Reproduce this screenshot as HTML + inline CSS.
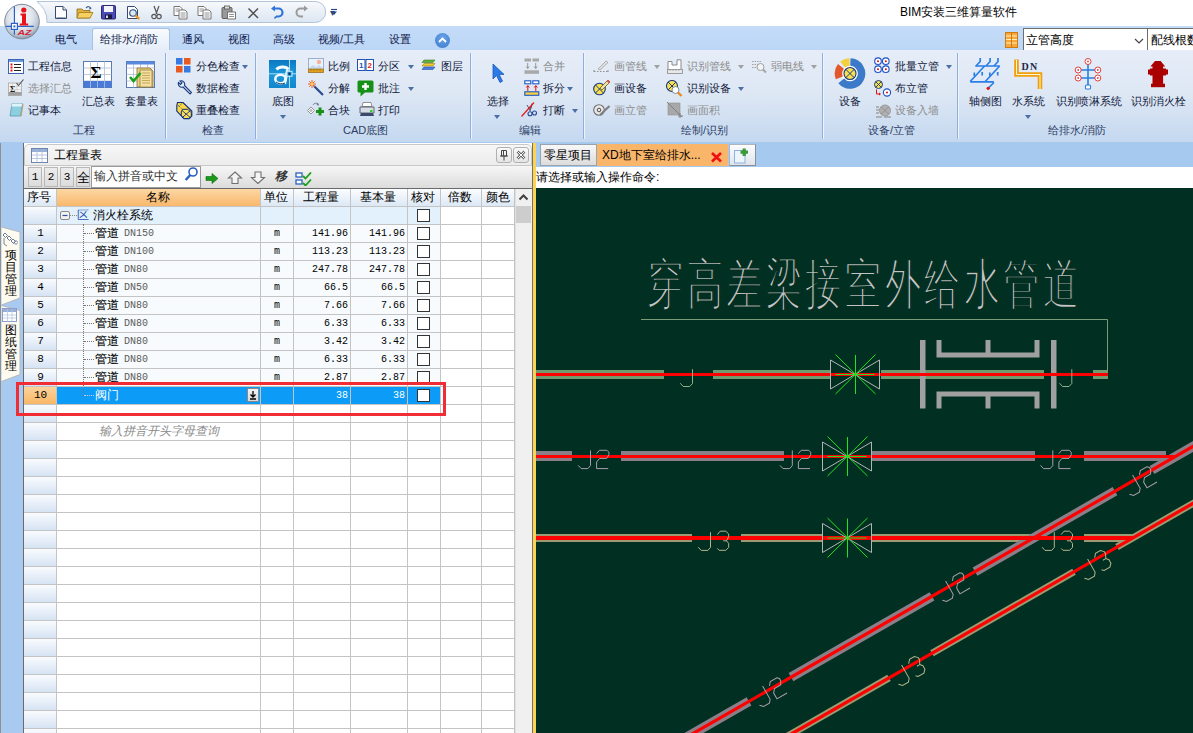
<!DOCTYPE html><html><head><meta charset="utf-8"><style>
*{margin:0;padding:0;box-sizing:border-box}
html,body{width:1193px;height:733px;overflow:hidden;background:#fff;font-family:"Liberation Sans",sans-serif;font-size:12px;color:#000}
.ab{position:absolute}
.t{position:absolute;white-space:nowrap;line-height:14px;font-size:11px}
.tt{position:absolute;white-space:nowrap;line-height:14px;font-size:12px}
.rb{color:#10183a;font-weight:500}
.dis{color:#8c8c8c}
.arr{position:absolute;width:0;height:0;border-left:3.5px solid transparent;border-right:3.5px solid transparent;border-top:4px solid #4a6fa5}
.arrg{border-top-color:#a0a0a0}
.sep{position:absolute;top:53px;width:1px;height:86px;background:#8eb0dc;box-shadow:1px 0 0 #eef4fb}
.glab{position:absolute;top:123px;line-height:14px;color:#2c3c64;white-space:nowrap;font-size:11px}
.mono{font-family:"Liberation Mono",monospace}
</style></head><body>
<div class="ab" style="left:0;top:0;width:1193px;height:26px;background:#fff"></div>
<svg class="ab" style="left:0;top:0" width="340" height="26"><defs><linearGradient id="qg" x1="0" y1="0" x2="0" y2="1"><stop offset="0" stop-color="#f7f9fc"/><stop offset="1" stop-color="#dce6f2"/></linearGradient></defs><path d="M36.9 1.5H315.2A10.5 10.5 0 0 1 315.2 22.5H47A25 25 0 0 0 36.9 1.5Z" fill="url(#qg)" stroke="#b4c4d8" stroke-width="1"/></svg>
<div class="t" style="left:330px;top:6px;font-size:10px;color:#2b4a7a">&#9662;</div>
<div class="tt" style="left:900px;top:5px;color:#000">BIM安装三维算量软件</div>
<div class="ab" style="left:0;top:26px;width:1193px;height:24px;background:linear-gradient(#c4dcf8,#bcd6f6)"></div>
<div class="ab" style="left:92px;top:28px;width:78px;height:23px;border:1px solid #a9c2e2;border-bottom:none;border-radius:3px 3px 0 0;background:linear-gradient(#f8fbfe,#e4edf8)"></div>
<div class="t" style="left:55px;top:32px;color:#0e1648;font-weight:500">电气</div>
<div class="t" style="left:100px;top:32px;color:#0e1648;font-weight:500">给排水/消防</div>
<div class="t" style="left:182px;top:32px;color:#0e1648;font-weight:500">通风</div>
<div class="t" style="left:228px;top:32px;color:#0e1648;font-weight:500">视图</div>
<div class="t" style="left:273px;top:32px;color:#0e1648;font-weight:500">高级</div>
<div class="t" style="left:318px;top:32px;color:#0e1648;font-weight:500">视频/工具</div>
<div class="t" style="left:389px;top:32px;color:#0e1648;font-weight:500">设置</div>
<div class="ab" style="left:435px;top:33px;width:15px;height:15px;border-radius:50%;background:radial-gradient(circle at 50% 35%,#6aa6ea,#3b78c8)"></div>
<svg class="ab" style="left:435px;top:33px" width="15" height="15"><path d="M4 9 L7.5 5.5 L11 9" stroke="#fff" stroke-width="1.8" fill="none"/></svg>
<svg class="ab" style="left:1005px;top:32px" width="13" height="16"><rect x=".5" y=".5" width="12" height="15" fill="#f6a93a" stroke="#d07a10"/><path d="M1 4h11M1 7.5h11M1 11h11" stroke="#fff2c8" stroke-width="1.2"/><path d="M6.5 1v14" stroke="#d07a10" stroke-width="1"/></svg>
<div class="ab" style="left:1023px;top:28px;width:125px;height:22px;border:1px solid #6e6e6e;border-bottom:none;border-right:none;background:#fff"></div>
<div class="tt" style="left:1026px;top:33px;color:#000">立管高度</div>
<svg class="ab" style="left:1134px;top:38px" width="10" height="7"><path d="M1 1 L5 5 L9 1" stroke="#444" stroke-width="1.2" fill="none"/></svg>
<div class="ab" style="left:1147px;top:28px;width:46px;height:22px;border-left:1.5px solid #6e6e6e;border-top:1px solid #6e6e6e;background:#fff"></div>
<div class="tt" style="left:1151px;top:33px;color:#000">配线根数</div>
<div class="ab" style="left:0;top:50px;width:1193px;height:92px;background:linear-gradient(#e6edf8 0%,#dde7f4 50%,#c4d8f0 100%)"></div>
<div class="sep" style="left:165px"></div>
<div class="sep" style="left:255px"></div>
<div class="sep" style="left:470px"></div>
<div class="sep" style="left:583px"></div>
<div class="sep" style="left:822px"></div>
<div class="sep" style="left:957px"></div>
<div class="t rb" style="left:28px;top:59px">工程信息</div>
<div class="t dis" style="left:28px;top:81px">选择汇总</div>
<div class="t rb" style="left:28px;top:103px">记事本</div>
<div class="t rb" style="left:82px;top:94px">汇总表</div>
<div class="t rb" style="left:125px;top:94px">套量表</div>
<div class="glab" style="left:73px">工程</div>
<div class="t rb" style="left:196px;top:59px">分色检查</div>
<div class="arr" style="left:242px;top:65px"></div>
<div class="t rb" style="left:196px;top:81px">数据检查</div>
<div class="t rb" style="left:196px;top:103px">重叠检查</div>
<div class="glab" style="left:202px">检查</div>
<div class="t rb" style="left:272px;top:94px">底图</div>
<div class="arr" style="left:280px;top:115px"></div>
<div class="t rb" style="left:328px;top:59px">比例</div>
<div class="t rb" style="left:378px;top:59px">分区</div>
<div class="arr" style="left:408px;top:65px"></div>
<div class="t rb" style="left:441px;top:59px">图层</div>
<div class="t rb" style="left:328px;top:81px">分解</div>
<div class="t rb" style="left:378px;top:81px">批注</div>
<div class="arr" style="left:408px;top:87px"></div>
<div class="t rb" style="left:328px;top:103px">合块</div>
<div class="t rb" style="left:378px;top:103px">打印</div>
<div class="glab" style="left:343px">CAD底图</div>
<div class="t rb" style="left:487px;top:94px">选择</div>
<div class="arr" style="left:494px;top:115px"></div>
<div class="t dis" style="left:543px;top:59px">合并</div>
<div class="t rb" style="left:543px;top:81px">拆分</div>
<div class="arr" style="left:567px;top:87px"></div>
<div class="t rb" style="left:543px;top:103px">打断</div>
<div class="arr" style="left:572px;top:109px"></div>
<div class="glab" style="left:519px">编辑</div>
<div class="t dis" style="left:614px;top:59px">画管线</div>
<div class="arr arrg" style="left:654px;top:65px"></div>
<div class="t dis" style="left:687px;top:59px">识别管线</div>
<div class="arr arrg" style="left:738px;top:65px"></div>
<div class="t dis" style="left:771px;top:59px">弱电线</div>
<div class="arr arrg" style="left:811px;top:65px"></div>
<div class="t rb" style="left:614px;top:81px">画设备</div>
<div class="t rb" style="left:687px;top:81px">识别设备</div>
<div class="arr" style="left:738px;top:87px"></div>
<div class="t dis" style="left:614px;top:103px">画立管</div>
<div class="t dis" style="left:687px;top:103px">画面积</div>
<div class="glab" style="left:681px">绘制/识别</div>
<div class="t rb" style="left:839px;top:94px">设备</div>
<div class="t rb" style="left:895px;top:59px">批量立管</div>
<div class="arr" style="left:946px;top:65px"></div>
<div class="t rb" style="left:895px;top:81px">布立管</div>
<div class="t dis" style="left:895px;top:103px">设备入墙</div>
<div class="glab" style="left:868px">设备/立管</div>
<div class="t rb" style="left:969px;top:94px">轴侧图</div>
<div class="t rb" style="left:1012px;top:94px">水系统</div>
<div class="arr" style="left:1025px;top:115px"></div>
<div class="t rb" style="left:1056px;top:94px">识别喷淋系统</div>
<div class="t rb" style="left:1131px;top:94px">识别消火栓</div>
<div class="glab" style="left:1048px">给排水/消防</div>
<div class="ab" style="left:0;top:142px;width:1193px;height:591px;background:#a9caf0"></div>
<div class="ab" style="left:23px;top:143px;width:510px;height:590px;background:#fff;border-left:1px solid #6a6a6a"></div>
<div class="ab" style="left:24px;top:144px;width:508px;height:22px;border:1px solid #c8c8c8;border-radius:5px 5px 0 0;background:linear-gradient(#f7f7f7,#ececec)"></div>
<div class="tt" style="left:54px;top:148px;font-size:12px">工程量表</div>
<div class="ab" style="left:24px;top:166px;width:509px;height:23px;background:linear-gradient(#f6f6f6,#dcdcdc);border-bottom:1px solid #6a6a6a"></div>
<div class="ab" style="left:28px;top:167px;width:14px;height:20px;border:1px solid #b8b8b8;background:linear-gradient(#ececec,#dcdcdc);text-align:center;line-height:19px;font-size:11px;font-family:'Liberation Mono'">1</div>
<div class="ab" style="left:44px;top:167px;width:14px;height:20px;border:1px solid #b8b8b8;background:linear-gradient(#ececec,#dcdcdc);text-align:center;line-height:19px;font-size:11px;font-family:'Liberation Mono'">2</div>
<div class="ab" style="left:60px;top:167px;width:14px;height:20px;border:1px solid #b8b8b8;background:linear-gradient(#ececec,#dcdcdc);text-align:center;line-height:19px;font-size:11px;font-family:'Liberation Mono'">3</div>
<div class="ab" style="left:76px;top:167px;width:14px;height:20px;border:1px solid #b8b8b8;background:linear-gradient(#ececec,#dcdcdc);text-align:center;line-height:19px;font-size:13px;font-family:'Liberation Sans'">全</div>
<div class="ab" style="left:91px;top:166px;width:110px;height:22px;border:1px solid #9a9a9a;background:#fff"></div>
<div class="tt" style="left:94px;top:169px;color:#333">输入拼音或中文</div>
<div class="ab" style="left:24px;top:189px;width:491px;height:17px;background:linear-gradient(#fbfdff,#dce8f5)"></div>
<div class="ab" style="left:57px;top:189px;width:203px;height:17px;background:linear-gradient(#fdd7a4,#f9b86c)"></div>
<div class="tt" style="left:27px;top:190px">序号</div>
<div class="tt" style="left:146px;top:190px">名称</div>
<div class="tt" style="left:264px;top:190px">单位</div>
<div class="tt" style="left:303px;top:190px">工程量</div>
<div class="tt" style="left:360px;top:190px">基本量</div>
<div class="tt" style="left:411px;top:190px">核对</div>
<div class="tt" style="left:448px;top:190px">倍数</div>
<div class="tt" style="left:486px;top:190px">颜色</div>
<svg class="ab" style="left:3px;top:3px" width="38" height="38" viewBox="0 0 38 38"><defs><radialGradient id="lg" cx="45%" cy="35%" r="65%"><stop offset="0" stop-color="#ffffff"/><stop offset="0.55" stop-color="#dfe5ec"/><stop offset="0.85" stop-color="#b8c3d0"/><stop offset="1" stop-color="#8a96a6"/></radialGradient></defs><circle cx="19" cy="18.6" r="17.3" fill="url(#lg)" stroke="#7f8a98" stroke-width="1"/><path d="M11.4 3.5V31.7M3 23.4H30.7" stroke="#2d63c8" stroke-width="1.2"/><rect x="8.4" y="20.4" width="6" height="6" fill="#fff" stroke="#2d63c8" stroke-width="1.2"/><rect x="10.4" y="22.4" width="2" height="2" fill="#2d63c8"/><circle cx="20.8" cy="7" r="2.6" fill="#e8141c"/><path d="M17.5 10.6h5.5v10h2.2v2h-8.4v-2h2.2v-8h-1.5z" fill="#e8141c"/><text transform="translate(14.6,31.6) scale(1.38,1)" font-family="Liberation Sans" font-weight="bold" font-style="italic" font-size="7.6" fill="#d42030" letter-spacing="-0.2">AZ</text></svg>
<svg class="ab" style="left:54px;top:5px" width="14" height="15" viewBox="0 0 14 15"><path d="M1.5 1.5h7.5l3.5 3.5v8.5h-11z" fill="#fff" stroke="#394a6a"/><path d="M9 1.5v3.5h3.5" fill="#dfe6ef" stroke="#394a6a"/><path d="M2.5 12.5h9" stroke="#9aa6b8"/></svg>
<svg class="ab" style="left:76px;top:5px" width="18" height="15" viewBox="0 0 18 15"><path d="M1 4h5l1.5 1.5H14V13H1z" fill="#e2b23a" stroke="#8a6a20" stroke-width=".8"/><path d="M3 7.5h14l-3 5.5H1z" fill="#f8d060" stroke="#9a7a20" stroke-width=".8"/><path d="M10 3c2-2 4-1.5 5 .5" stroke="#4a6890" fill="none" stroke-width="1.2"/><path d="M14 1.5l1.5 2.5-2.5.5" fill="#4a6890"/></svg>
<svg class="ab" style="left:101px;top:5px" width="15" height="15" viewBox="0 0 15 15"><rect x="0.5" y="0.5" width="14" height="13.5" rx="1" fill="#4a4ab8" stroke="#2a2a70"/><rect x="3" y="1" width="9" height="6" fill="#f4f4f8"/><rect x="4" y="9.5" width="7" height="4.5" fill="#1a1a40"/><rect x="5" y="10.5" width="2" height="2.5" fill="#d8d8e8"/></svg>
<svg class="ab" style="left:126px;top:5px" width="15" height="15" viewBox="0 0 15 15"><path d="M1.5 1.5h7l3 3v9h-10z" fill="#fff" stroke="#394a6a"/><circle cx="7" cy="8" r="3.3" fill="#dbeaf6" stroke="#2a4a7a" stroke-width="1.1"/><path d="M9.3 10.3l4 3.5" stroke="#e8962a" stroke-width="2.2"/></svg>
<svg class="ab" style="left:150px;top:5px" width="13" height="15" viewBox="0 0 13 15"><path d="M4 1l3 8M9 1l-3 8" stroke="#555" stroke-width="1.2"/><circle cx="4" cy="11.5" r="2.2" fill="none" stroke="#555" stroke-width="1.2"/><circle cx="9" cy="11.5" r="2.2" fill="none" stroke="#555" stroke-width="1.2"/></svg>
<svg class="ab" style="left:173px;top:5px" width="16" height="15" viewBox="0 0 16 15"><path d="M1 1.5h6l2 2v7H1z" fill="#fff" stroke="#666" stroke-width=".9"/><path d="M6 5h6l2 2v7H6z" fill="#fff" stroke="#666" stroke-width=".9"/><path d="M7.5 8h5M7.5 10h5M7.5 12h5M2.5 4h4M2.5 6h3" stroke="#777" stroke-width=".8"/></svg>
<svg class="ab" style="left:197px;top:5px" width="16" height="15" viewBox="0 0 16 15"><path d="M1 1.5h6l2 2v7H1z" fill="#fff" stroke="#666" stroke-width=".9"/><path d="M6 5h6l2 2v7H6z" fill="#fff" stroke="#666" stroke-width=".9"/><path d="M7.5 8h5M7.5 10h5M7.5 12h5M2.5 4h4M2.5 6h3" stroke="#777" stroke-width=".8"/></svg>
<svg class="ab" style="left:221px;top:5px" width="16" height="15" viewBox="0 0 16 15"><rect x="1" y="2.5" width="10" height="11" rx="1" fill="#9a9a9a" stroke="#555" stroke-width=".9"/><rect x="3.5" y="1" width="5" height="3" fill="#ddd" stroke="#555" stroke-width=".8"/><path d="M6.5 7h8v7h-8z" fill="#fff" stroke="#666" stroke-width=".9"/><path d="M8 9.5h5M8 11.5h5" stroke="#777" stroke-width=".8"/></svg>
<svg class="ab" style="left:247px;top:7px" width="13" height="12" viewBox="0 0 13 12"><path d="M1.5 1.5l9.5 9.5M11 1.5l-9.5 9.5" stroke="#505050" stroke-width="1.5"/></svg>
<svg class="ab" style="left:270px;top:5px" width="15" height="15" viewBox="0 0 15 15"><path d="M4 3.5h4.5a4 4 0 0 1 0 8H6" stroke="#2e74d8" stroke-width="2.2" fill="none"/><path d="M1 3.5l4-3v6z" fill="#2e74d8"/><path d="M6 11.5l-1.5 2" stroke="#2e74d8" stroke-width="1.5"/></svg>
<svg class="ab" style="left:294px;top:5px" width="15" height="15" viewBox="0 0 15 15"><path d="M11 3.5H6.5a4 4 0 0 0 0 8H9" stroke="#9a9a9a" stroke-width="2" fill="none"/><path d="M14 3.5l-4-3v6z" fill="#9a9a9a"/></svg>
<svg class="ab" style="left:330px;top:8px" width="8" height="8" viewBox="0 0 8 8"><path d="M1 1.5h6" stroke="#2a4a8a" stroke-width="1.2"/><path d="M1 3.5h6l-3 3.5z" fill="#2a4a8a"/></svg>
<svg class="ab" style="left:8px;top:59px" width="16" height="15" viewBox="0 0 16 15"><rect x=".5" y=".5" width="15" height="14" fill="#fff" stroke="#3a64b0"/><rect x="1" y="1" width="14" height="2" fill="#6a9ae0"/><rect x="2.5" y="4.5" width="2" height="2" fill="#e01010"/><rect x="2.5" y="7.5" width="2" height="2" fill="#e01010"/><rect x="2.5" y="10.5" width="2" height="2" fill="#e01010"/><path d="M6 5.5h7M6 8.5h7M6 11.5h7" stroke="#222" stroke-width="1"/></svg>
<svg class="ab" style="left:8px;top:79px" width="16" height="17" viewBox="0 0 16 17"><rect x=".5" y="4" width="13" height="12.5" fill="#f2f2f2" stroke="#a8a8a8" stroke-width=".8"/><path d="M.5 7.5h13M.5 10.5h13M4.5 4v12.5M9 4v12.5" stroke="#c8c8c8" stroke-width=".6"/><rect x=".5" y="13" width="13" height="3.5" fill="#a0a0a0"/><text x="2" y="12.5" font-family="Liberation Serif" font-weight="bold" font-size="8" fill="#202020">Σ</text><path d="M8.5 4l2 2.5 5-6" stroke="#505050" stroke-width="1.1" fill="none"/></svg>
<svg class="ab" style="left:9px;top:102px" width="15" height="15" viewBox="0 0 15 15"><path d="M3 1.5h10.5l-2 12.5H1z" fill="#8cd0e0" stroke="#5a9ab0" stroke-width=".8"/><path d="M3 1.5h10.5l-1 3H2.5z" fill="#dff4fa"/><path d="M11.5 14l2-12.5 1 1-2 12z" fill="#b8a070"/></svg>
<svg class="ab" style="left:83px;top:61px" width="29" height="27" viewBox="0 0 29 27"><rect x=".5" y=".5" width="28" height="26" fill="#fff" stroke="#5878b0"/><path d="M7.5 .5V26.5" stroke="#b0bcd0" stroke-width=".8"/><path d="M14.5 .5V26.5" stroke="#b0bcd0" stroke-width=".8"/><path d="M21.5 .5V26.5" stroke="#b0bcd0" stroke-width=".8"/><path d="M.5 7.0H28.5" stroke="#b0bcd0" stroke-width=".8"/><path d="M.5 13.5H28.5" stroke="#b0bcd0" stroke-width=".8"/><path d="M.5 20.0H28.5" stroke="#b0bcd0" stroke-width=".8"/><rect x=".5" y="20" width="28" height="6.5" fill="#4a7ad8"/><path d="M7.5 20v6.5M14.5 20v6.5M21.5 20v6.5" stroke="#a8c4f0" stroke-width=".8"/><text x="7.5" y="17" font-family="Liberation Serif" font-weight="bold" font-size="17" fill="#000">Σ</text></svg>
<svg class="ab" style="left:126px;top:61px" width="29" height="27" viewBox="0 0 29 27"><rect x=".5" y=".5" width="28" height="26" fill="#fff" stroke="#5878b0"/><path d="M7.5 .5V26.5" stroke="#b0bcd0" stroke-width=".8"/><path d="M14.5 .5V26.5" stroke="#b0bcd0" stroke-width=".8"/><path d="M21.5 .5V26.5" stroke="#b0bcd0" stroke-width=".8"/><path d="M.5 7.0H28.5" stroke="#b0bcd0" stroke-width=".8"/><path d="M.5 13.5H28.5" stroke="#b0bcd0" stroke-width=".8"/><path d="M.5 20.0H28.5" stroke="#b0bcd0" stroke-width=".8"/><rect x=".5" y=".5" width="28" height="3" fill="#5a8ae0"/><path d="M11 7h13l3 3v16H11z" fill="#e8d080" stroke="#8a7030" stroke-width=".8"/><path d="M14 9h12v17H14z" fill="#f4e0a0" stroke="#9a8040" stroke-width=".8"/><path d="M16 12h8M16 14.5h8M16 17h8M16 19.5h8M16 22h8" stroke="#b09040" stroke-width=".7"/><path d="M4 16l3.5 4 7-8" stroke="#1aa01a" stroke-width="2.6" fill="none"/></svg>
<svg class="ab" style="left:176px;top:58px" width="15" height="15" viewBox="0 0 15 15"><rect x="0" y="0" width="6.5" height="6.5" fill="#3a7ae0"/><rect x="8" y="0" width="6.5" height="6.5" fill="#e85a20"/><rect x="0" y="8" width="6.5" height="6.5" fill="#e85a20"/><rect x="8" y="8" width="6.5" height="6.5" fill="#3a7ae0"/></svg>
<svg class="ab" style="left:176px;top:80px" width="16" height="16" viewBox="0 0 16 16"><path d="M2.5 2.5a3.5 3.5 0 0 0 4.5 4.5l7 7 1.5-1.5-7-7a3.5 3.5 0 0 0-4.5-4.5l2 2-1.5 1.5z" fill="#e8eef8" stroke="#1a3a80" stroke-width="1.1"/></svg>
<svg class="ab" style="left:176px;top:101px" width="17" height="19" viewBox="0 0 17 19"><path d="M1.5 1.5H7L15.8 10V15L13 17.8H8L.8 10V4.5z" fill="#f8d848" stroke="#102a70" stroke-width="1.1"/><path d="M6.5 8.3H11.8L15.3 11.8V15.3L12.8 17.5H8.2L5.3 14.8V10.8z" fill="#fbe060" stroke="#102a70" stroke-width="1"/><path d="M6 9.5L14.5 16.8M14.5 9.5L6 16.8" stroke="#102a70" stroke-width=".9"/><path d="M2 4l4.5 4.5M6.5 1.8L2.5 6" stroke="#102a70" stroke-width=".8" stroke-dasharray="1 1"/></svg>
<svg class="ab" style="left:269px;top:60px" width="27" height="28" viewBox="0 0 27 28"><defs><linearGradient id="dg" x1="0" y1="0" x2="0" y2="1"><stop offset="0" stop-color="#0b78c0"/><stop offset=".5" stop-color="#1c98dc"/><stop offset="1" stop-color="#1286cc"/></linearGradient></defs><rect x="0" y="0" width="27" height="28" fill="url(#dg)"/><path d="M20.5 0V28M0 13.8H27" stroke="#a8dcf6" stroke-width="1"/><path d="M7.5 9.5C10 6.5 17 6 19.5 9.5" stroke="#f4fbff" stroke-width="3" fill="none"/><path d="M18.5 10L15.5 24" stroke="#e0f4ff" stroke-width="3"/><ellipse cx="11.5" cy="19" rx="5.2" ry="4.3" fill="none" stroke="#f0faff" stroke-width="2.6"/><path d="M7 22c2 2 6 2.5 9 1" stroke="#204060" stroke-width="1" fill="none"/><rect x="18" y="11.3" width="5" height="5" fill="#1a8ed2" stroke="#c8ecfc" stroke-width="1"/><rect x="19.6" y="12.8" width="1.8" height="2" fill="#102030"/></svg>
<svg class="ab" style="left:308px;top:58px" width="16" height="15" viewBox="0 0 16 15"><rect x=".5" y=".5" width="15" height="14" fill="#e8f2fc" stroke="#8aa0c0" stroke-width=".8"/><circle cx="11" cy="4" r="2.2" fill="#f8b0a0"/><path d="M1 10l4-3 3 2 3-2 4 3v1H1z" fill="#c8d8ec"/><rect x=".5" y="11" width="15" height="3.5" fill="#e0a020" stroke="#9a6a10" stroke-width=".6"/><path d="M3 11v1.5M6 11v1.5M9 11v1.5M12 11v1.5" stroke="#6a4a10" stroke-width=".6"/></svg>
<svg class="ab" style="left:357px;top:59px" width="17" height="12" viewBox="0 0 17 12"><rect x=".5" y=".5" width="7.5" height="11" fill="#fff" stroke="#2050b0"/><rect x="9" y=".5" width="7.5" height="11" fill="#fff" stroke="#2050b0"/><text x="2" y="9" font-family="Liberation Sans" font-weight="bold" font-size="8" fill="#2050b0">1</text><text x="10.6" y="9" font-family="Liberation Sans" font-weight="bold" font-size="8" fill="#e02020">2</text></svg>
<svg class="ab" style="left:421px;top:59px" width="15" height="12" viewBox="0 0 15 12"><path d="M3 1h11l-2 2.5H1z" fill="#60b040" stroke="#3a8020" stroke-width=".6"/><path d="M3 4.5h11l-2 2.5H1z" fill="#f0c830" stroke="#a08010" stroke-width=".6"/><path d="M3 8h11l-2 2.5H1z" fill="#4a80e0" stroke="#2a50a0" stroke-width=".6"/></svg>
<svg class="ab" style="left:308px;top:80px" width="16" height="16" viewBox="0 0 16 16"><path d="M6 6l9 9" stroke="#2a4a90" stroke-width="2.2"/><path d="M4 0v8M0 4h8M1.2 1.2l5.6 5.6M6.8 1.2L1.2 6.8" stroke="#f06020" stroke-width="1"/><circle cx="4" cy="4" r="1.3" fill="#ffd040"/></svg>
<svg class="ab" style="left:357px;top:80px" width="17" height="17" viewBox="0 0 17 17"><path d="M2 .5h13a1.5 1.5 0 0 1 1.5 1.5v9a1.5 1.5 0 0 1-1.5 1.5H8l-4.5 4v-4H2A1.5 1.5 0 0 1 .5 11V2A1.5 1.5 0 0 1 2 .5z" fill="#189018"/><path d="M8.5 3v7M5 6.5h7" stroke="#fff" stroke-width="2.4"/></svg>
<svg class="ab" style="left:307px;top:102px" width="17" height="14" viewBox="0 0 17 14"><path d="M4 5l3.5 3.5L4 12 .5 8.5z" fill="#fff" stroke="#888" stroke-width=".9"/><path d="M4 6.5l2 2-2 2-2-2z" fill="#bbb"/><path d="M11.5 5.5h3v2.5h2.5v3h-2.5v2.5h-3v-2.5H9v-3h2.5z" fill="#189018"/><path d="M6 3c1-2 4-2.5 5.5-.5" stroke="#6a7a90" fill="none" stroke-width="1"/><path d="M11 .5l1 3-2.5-.5z" fill="#6a7a90"/></svg>
<svg class="ab" style="left:359px;top:102px" width="16" height="15" viewBox="0 0 16 15"><path d="M4 .5h8l1 4H3z" fill="#fff" stroke="#777" stroke-width=".8"/><path d="M1 5h14v6H1z" fill="#d8dce4" stroke="#505868" stroke-width=".9"/><path d="M2 11h12l1 3H1z" fill="#3a4a6a"/><rect x="11" y="8" width="2.5" height="2" fill="#30d030"/></svg>
<svg class="ab" style="left:492px;top:63px" width="13" height="21" viewBox="0 0 13 21"><path d="M1 1v15l3.5-3.5 3.5 7 2.5-1.3-3.3-6.8H12z" fill="#2a7ae8" stroke="#1a58b8" stroke-width=".8"/></svg>
<svg class="ab" style="left:524px;top:58px" width="16" height="16" viewBox="0 0 16 16"><rect x=".5" y=".5" width="6.5" height="3" fill="#a8a8a8"/><rect x="8.5" y=".5" width="6.5" height="3" fill="#a8a8a8"/><path d="M3.7 5v5M11.7 5v5" stroke="#808080" stroke-width=".8"/><path d="M2.2 8.5l1.5 2 1.5-2M10.2 8.5l1.5 2 1.5-2" stroke="#808080" fill="none" stroke-width=".8"/><rect x=".5" y="12.3" width="14.5" height="3.5" fill="#a8a8a8"/></svg>
<svg class="ab" style="left:524px;top:80px" width="16" height="16" viewBox="0 0 16 16"><rect x=".8" y=".8" width="6" height="3" fill="#fff" stroke="#1a58c8" stroke-width="1.1"/><rect x="8.8" y=".8" width="6" height="3" fill="#fff" stroke="#1a58c8" stroke-width="1.1"/><path d="M3.8 6v5M11.8 6v5" stroke="#e01010" stroke-width="1"/><path d="M2.3 7.5l1.5-2 1.5 2M10.3 7.5l1.5-2 1.5 2" stroke="#e01010" fill="none" stroke-width="1"/><rect x=".8" y="11.8" width="14" height="3.5" fill="#f8d040" stroke="#1a58c8" stroke-width="1.1"/></svg>
<svg class="ab" style="left:521px;top:102px" width="17" height="15" viewBox="0 0 17 15"><path d="M11 1.5c-.5 4-1 5.5-2.5 7M6 3l3.5 6" stroke="#4a5a7a" stroke-width="1"/><circle cx="9" cy="11.8" r="2" fill="none" stroke="#2a4a9a" stroke-width="1.1"/><circle cx="13.5" cy="11" r="2" fill="none" stroke="#2a4a9a" stroke-width="1.1"/><path d="M.5 14.5L13 .5" stroke="#e81818" stroke-width="1.2"/></svg>
<svg class="ab" style="left:593px;top:59px" width="16" height="13" viewBox="0 0 16 13"><path d="M1 12.5h14" stroke="#909090" stroke-width="1" stroke-dasharray="1.5 1.5"/><path d="M1 11v3M15 11v3" stroke="#909090"/><path d="M5 10l8-8 2 1.5-8 7.5z" fill="#e0e0e0" stroke="#a0a0a0" stroke-width=".8"/></svg>
<svg class="ab" style="left:593px;top:79px" width="18" height="17" viewBox="0 0 18 17"><circle cx="6.5" cy="10" r="5.8" fill="#f8e050" stroke="#1a3a80" stroke-width="1.1"/><path d="M2.5 6l8 8M10.5 6l-8 8" stroke="#1a3a80" stroke-width="1"/><path d="M7 9l8-8 2 2-8 8z" fill="#f0e0a0" stroke="#6a5a20" stroke-width=".8"/><path d="M14.5 1.5l2 2" stroke="#e05050" stroke-width="2"/></svg>
<svg class="ab" style="left:593px;top:104px" width="18" height="12" viewBox="0 0 18 12"><circle cx="6" cy="6" r="5.3" fill="#e8e8e8" stroke="#707070" stroke-width="1.1"/><circle cx="6" cy="6" r="1.8" fill="none" stroke="#505050" stroke-width="1"/><path d="M7 11L16.5 2" stroke="#808080" stroke-width="2.2"/></svg>
<svg class="ab" style="left:667px;top:59px" width="16" height="15" viewBox="0 0 16 15"><path d="M1 10V2.5h4V6h5V.8h4V10" stroke="#8a8a8a" stroke-width="1" fill="#fff"/><rect x=".5" y="10.5" width="15" height="4" fill="#e8e8e8" stroke="#8a8a8a" stroke-width=".8"/><path d="M3 10.5v1.5M6 10.5v1.5M9 10.5v1.5M12 10.5v1.5" stroke="#8a8a8a" stroke-width=".6"/></svg>
<svg class="ab" style="left:666px;top:80px" width="17" height="17" viewBox="0 0 17 17"><circle cx="6" cy="6" r="5.5" fill="#f8e050" stroke="#1a3a80" stroke-width="1.1"/><path d="M2.2 2.2l7.6 7.6M9.8 2.2L2.2 9.8" stroke="#1a3a80" stroke-width="1"/><circle cx="9.5" cy="10" r="3.5" fill="#fff" stroke="#7a8a9a" stroke-width="1"/><path d="M12 12.5l3.5 3.5" stroke="#e88a20" stroke-width="2.4"/></svg>
<svg class="ab" style="left:667px;top:102px" width="16" height="16" viewBox="0 0 16 16"><rect x="1" y="1" width="12" height="12" fill="#a8a8a8" stroke="#909090" stroke-width=".6"/><path d="M0 0l15 15M13 11v5M11 14h5" stroke="#808080" stroke-width="1"/></svg>
<svg class="ab" style="left:751px;top:60px" width="16" height="14" viewBox="0 0 16 14"><path d="M1 1.5h10M1 4.5h6M1 7.5h5" stroke="#9a9a9a" stroke-width=".9" stroke-dasharray="1.5 1"/><circle cx="9.5" cy="7" r="3.5" fill="#f4f4f4" stroke="#a0a0a0" stroke-width="1"/><path d="M12 9.5l3 3" stroke="#a8a8a8" stroke-width="2.2"/></svg>
<svg class="ab" style="left:834px;top:58px" width="32" height="32" viewBox="0 0 32 32"><circle cx="16" cy="16" r="8.5" fill="#fff"/><path d="M16.40 4.01A11.5 11.5 0 1 1 7.19 22.89" stroke="#3a7ac8" stroke-width="7.5" fill="none"/><path d="M5.34 19.81A11.5 11.5 0 0 1 6.94 8.42" stroke="#e2582a" stroke-width="7.5" fill="none"/><path d="M8.61 6.69A11.5 11.5 0 0 1 15.60 4.01" stroke="#f4d040" stroke-width="7.5" fill="none"/><circle cx="16" cy="15.5" r="6" fill="#f8e050" stroke="#1a3a80" stroke-width="1.1"/><path d="M11.8 11.3l8.4 8.4M20.2 11.3l-8.4 8.4" stroke="#1a3a80" stroke-width="1"/></svg>
<svg class="ab" style="left:874px;top:57px" width="16" height="17" viewBox="0 0 16 17"><g fill="#fff" stroke="#1a50c8" stroke-width="1.1"><circle cx="4" cy="4.2" r="3.3"/><circle cx="11.8" cy="4.2" r="3.3"/><circle cx="4" cy="12.2" r="3.3"/><circle cx="11.8" cy="12.2" r="3.3"/></g><g fill="#d01010"><circle cx="4" cy="4.2" r="1"/><circle cx="11.8" cy="4.2" r="1"/><circle cx="4" cy="12.2" r="1"/><circle cx="11.8" cy="12.2" r="1"/></g></svg>
<svg class="ab" style="left:874px;top:80px" width="18" height="17" viewBox="0 0 18 17"><circle cx="4.5" cy="4.5" r="4" fill="#f8e050" stroke="#1a3a80" stroke-width="1"/><path d="M1.7 1.7l5.6 5.6M7.3 1.7L1.7 7.3" stroke="#1a3a80" stroke-width=".9"/><path d="M2.5 9.5v4.5h3" stroke="#e01010" stroke-width="1" fill="none"/><path d="M5 12.5l2 1.5-2 1.5z" fill="#e01010"/><circle cx="13" cy="12.5" r="3.6" fill="#fff" stroke="#1a50c8" stroke-width="1.1"/><circle cx="13" cy="12.5" r="1" fill="#d01010"/></svg>
<svg class="ab" style="left:876px;top:104px" width="15" height="15" viewBox="0 0 15 15"><circle cx="9" cy="6.5" r="5.5" fill="#b0b0b0" stroke="#9a9a9a"/><path d="M5.2 2.7l7.6 7.6M12.8 2.7l-7.6 7.6" stroke="#8a8a8a" stroke-width=".8"/><path d="M0 3h3M0 6h3M0 9h3M0 13h6M8 13h7" stroke="#a0a0a0" stroke-width="1.5"/></svg>
<svg class="ab" style="left:964px;top:54px" width="40" height="38" viewBox="0 0 40 38"><g stroke="#2a7ee8" stroke-width="1.7" fill="none" stroke-linecap="butt"><path d="M16.2 4v3.5L12 12M26.1 4v3.5L22 12M34 4v3.5L30 12"/><path d="M11.3 12H35.7M6.2 27.8H29.9"/><path d="M20.6 12L6.2 27.5M35.7 12L21.3 27.5"/><path d="M10.3 18.6v3.4M18.2 18v3.6M25.8 18.6v3.4M33.7 18v3.6"/><path d="M29.9 28.5L24.4 34"/></g><circle cx="24.2" cy="34.3" r="1.6" fill="#e01010"/></svg>
<svg class="ab" style="left:1012px;top:57px" width="32" height="34" viewBox="0 0 32 34"><path d="M4.5 2.5V17.5H28V32" stroke="#f0a00a" stroke-width="4.6" fill="none"/><path d="M4.5 3V17.5H28V32" stroke="#fff8d8" stroke-width="1" fill="none"/><text x="9.5" y="12.5" font-family="Liberation Serif" font-weight="bold" font-size="10" fill="#1a2a4a" letter-spacing="1.3">DN</text></svg>
<svg class="ab" style="left:1073px;top:58px" width="30" height="32" viewBox="0 0 30 32"><path d="M15 3v25M5 12h20M5 20h20" stroke="#2a80e0" stroke-width="1.6"/><rect x="12.5" y="27" width="5" height="4" rx="1" fill="#fff" stroke="#2a80e0" stroke-width="1.1"/><g fill="#fff" stroke="#e04040" stroke-width="1"><circle cx="15" cy="3.5" r="3"/><circle cx="5.2" cy="12" r="3"/><circle cx="24.8" cy="12" r="3"/><circle cx="5.2" cy="20" r="3"/><circle cx="24.8" cy="20" r="3"/></g><g fill="#e04040"><circle cx="15" cy="3.5" r=".9"/><circle cx="5.2" cy="12" r=".9"/><circle cx="24.8" cy="12" r=".9"/><circle cx="5.2" cy="20" r=".9"/><circle cx="24.8" cy="20" r=".9"/></g></svg>
<svg class="ab" style="left:1147px;top:60px" width="22" height="28" viewBox="0 0 22 28"><path d="M8 1h5.6l4.6 5.6H3.4z" fill="#aa0000"/><rect x="5.5" y="6" width="10.6" height="18.5" fill="#aa0000"/><path d="M1 9.5h2v-1h3v7H3v-1H1zM21 9.5h-2v-1h-3v7h3v-1h2z" fill="#aa0000"/><rect x="4" y="23.7" width="14" height="3.5" fill="#aa0000"/></svg>
<svg class="ab" style="left:31px;top:148px" width="17" height="15" viewBox="0 0 17 15"><rect x=".5" y=".5" width="16" height="14" fill="#fff" stroke="#6a86b0"/><rect x="1" y="1" width="15" height="3" fill="#98b0d8"/><path d="M6 1v13.5M11 1v13.5M1 7h15M1 10.5h15" stroke="#a8bad8" stroke-width=".8"/></svg>
<div class="ab" style="left:496px;top:147px;width:16px;height:16px;border:1px solid #b0b0b0;border-radius:3px;background:linear-gradient(#fafafa,#e4e4e4)"></div>
<svg class="ab" style="left:496px;top:147px" width="16" height="16" viewBox="0 0 16 16"><path d="M5.5 3.5h5v5.5h-5z" fill="none" stroke="#444" stroke-width="1"/><path d="M4 9h8M8 9v4.5M7.5 3.5v5" stroke="#444" stroke-width="1"/></svg>
<div class="ab" style="left:513px;top:147px;width:16px;height:16px;border:1px solid #b0b0b0;border-radius:3px;background:linear-gradient(#fafafa,#e4e4e4)"></div>
<svg class="ab" style="left:513px;top:147px" width="16" height="16" viewBox="0 0 16 16"><path d="M4.5 4.5l7 7M11.5 4.5l-7 7" stroke="#666" stroke-width="2.6"/><path d="M4.5 4.5l7 7M11.5 4.5l-7 7" stroke="#fff" stroke-width="1"/></svg>
<svg class="ab" style="left:184px;top:166px" width="14" height="16" viewBox="0 0 14 16"><circle cx="9" cy="6" r="4" fill="#fff" stroke="#2a60c0" stroke-width="1.6"/><path d="M6.2 9l-4.5 5" stroke="#2a60c0" stroke-width="2.4"/></svg>
<svg class="ab" style="left:205px;top:173px" width="14" height="11" viewBox="0 0 14 11"><path d="M1 3.5h6V.5l6 5-6 5V7.5H1z" fill="#1a9a1a" stroke="#0a6a0a" stroke-width=".6"/></svg>
<svg class="ab" style="left:227px;top:171px" width="16" height="13" viewBox="0 0 16 13"><path d="M8 1l6.5 6H11v5.5H5V7H1.5z" fill="#f4f4f4" stroke="#707070" stroke-width="1.1"/></svg>
<svg class="ab" style="left:250px;top:171px" width="16" height="13" viewBox="0 0 16 13"><path d="M8 12.5L1.5 6.5H5V1h6v5.5h3.5z" fill="#f4f4f4" stroke="#707070" stroke-width="1.1"/></svg>
<div class="tt" style="left:275px;top:169px;font-size:12px;font-weight:bold;font-style:italic;color:#333">移</div>
<svg class="ab" style="left:295px;top:172px" width="18" height="14" viewBox="0 0 18 14"><rect x="1" y="1" width="6" height="4" fill="#fff" stroke="#2a60c0" stroke-width="1.3"/><rect x="1" y="8" width="6" height="4" fill="#fff" stroke="#2a60c0" stroke-width="1.3"/><path d="M8 4l2.5 2.5L16 .5M8 11l2.5 2.5L16 7.5" stroke="#1aa01a" stroke-width="1.8" fill="none"/></svg>
<div class="ab" style="left:24px;top:206px;width:33px;height:18px;background:linear-gradient(#fbfdff,#d6e3f3);"></div>
<div class="ab" style="left:24px;top:224px;width:33px;height:18px;background:linear-gradient(#fbfdff,#d6e3f3);"></div>
<div class="ab" style="left:24px;top:242px;width:33px;height:18px;background:linear-gradient(#fbfdff,#d6e3f3);"></div>
<div class="ab" style="left:24px;top:260px;width:33px;height:18px;background:linear-gradient(#fbfdff,#d6e3f3);"></div>
<div class="ab" style="left:24px;top:278px;width:33px;height:18px;background:linear-gradient(#fbfdff,#d6e3f3);"></div>
<div class="ab" style="left:24px;top:296px;width:33px;height:18px;background:linear-gradient(#fbfdff,#d6e3f3);"></div>
<div class="ab" style="left:24px;top:314px;width:33px;height:18px;background:linear-gradient(#fbfdff,#d6e3f3);"></div>
<div class="ab" style="left:24px;top:332px;width:33px;height:18px;background:linear-gradient(#fbfdff,#d6e3f3);"></div>
<div class="ab" style="left:24px;top:350px;width:33px;height:18px;background:linear-gradient(#fbfdff,#d6e3f3);"></div>
<div class="ab" style="left:24px;top:368px;width:33px;height:18px;background:linear-gradient(#fbfdff,#d6e3f3);"></div>
<div class="ab" style="left:24px;top:386px;width:33px;height:18px;background:linear-gradient(#fbfdff,#d6e3f3);"></div>
<div class="ab" style="left:24px;top:404px;width:33px;height:18px;background:linear-gradient(#fbfdff,#d6e3f3);"></div>
<div class="ab" style="left:24px;top:422px;width:33px;height:18px;background:linear-gradient(#fbfdff,#d6e3f3);"></div>
<div class="ab" style="left:24px;top:440px;width:33px;height:18px;background:linear-gradient(#fbfdff,#d6e3f3);"></div>
<div class="ab" style="left:24px;top:458px;width:33px;height:18px;background:linear-gradient(#fbfdff,#d6e3f3);"></div>
<div class="ab" style="left:24px;top:476px;width:33px;height:18px;background:linear-gradient(#fbfdff,#d6e3f3);"></div>
<div class="ab" style="left:24px;top:494px;width:33px;height:18px;background:linear-gradient(#fbfdff,#d6e3f3);"></div>
<div class="ab" style="left:24px;top:512px;width:33px;height:18px;background:linear-gradient(#fbfdff,#d6e3f3);"></div>
<div class="ab" style="left:24px;top:530px;width:33px;height:18px;background:linear-gradient(#fbfdff,#d6e3f3);"></div>
<div class="ab" style="left:24px;top:548px;width:33px;height:18px;background:linear-gradient(#fbfdff,#d6e3f3);"></div>
<div class="ab" style="left:24px;top:566px;width:33px;height:18px;background:linear-gradient(#fbfdff,#d6e3f3);"></div>
<div class="ab" style="left:24px;top:584px;width:33px;height:18px;background:linear-gradient(#fbfdff,#d6e3f3);"></div>
<div class="ab" style="left:24px;top:602px;width:33px;height:18px;background:linear-gradient(#fbfdff,#d6e3f3);"></div>
<div class="ab" style="left:24px;top:620px;width:33px;height:18px;background:linear-gradient(#fbfdff,#d6e3f3);"></div>
<div class="ab" style="left:24px;top:638px;width:33px;height:18px;background:linear-gradient(#fbfdff,#d6e3f3);"></div>
<div class="ab" style="left:24px;top:656px;width:33px;height:18px;background:linear-gradient(#fbfdff,#d6e3f3);"></div>
<div class="ab" style="left:24px;top:674px;width:33px;height:18px;background:linear-gradient(#fbfdff,#d6e3f3);"></div>
<div class="ab" style="left:24px;top:692px;width:33px;height:18px;background:linear-gradient(#fbfdff,#d6e3f3);"></div>
<div class="ab" style="left:24px;top:710px;width:33px;height:18px;background:linear-gradient(#fbfdff,#d6e3f3);"></div>
<div class="ab" style="left:24px;top:728px;width:33px;height:18px;background:linear-gradient(#fbfdff,#d6e3f3);"></div>
<div class="ab" style="left:57px;top:206px;width:384px;height:18px;background:#e2f1fc"></div>
<div class="ab" style="left:57px;top:224px;width:384px;height:18px;background:#f7fbfe"></div>
<div class="ab" style="left:57px;top:242px;width:384px;height:18px;background:#f7fbfe"></div>
<div class="ab" style="left:57px;top:260px;width:384px;height:18px;background:#f7fbfe"></div>
<div class="ab" style="left:57px;top:278px;width:384px;height:18px;background:#f7fbfe"></div>
<div class="ab" style="left:57px;top:296px;width:384px;height:18px;background:#f7fbfe"></div>
<div class="ab" style="left:57px;top:314px;width:384px;height:18px;background:#f7fbfe"></div>
<div class="ab" style="left:57px;top:332px;width:384px;height:18px;background:#f7fbfe"></div>
<div class="ab" style="left:57px;top:350px;width:384px;height:18px;background:#f7fbfe"></div>
<div class="ab" style="left:57px;top:368px;width:384px;height:18px;background:#f7fbfe"></div>
<div class="ab" style="left:24px;top:386px;width:33px;height:18px;background:linear-gradient(#fdd5a0,#f8b767)"></div>
<div class="ab" style="left:57px;top:386px;width:384px;height:18px;background:#0c9bf7"></div>
<div class="ab" style="left:56px;top:189px;width:1px;height:544px;background:#c4c4c4"></div>
<div class="ab" style="left:260px;top:189px;width:1px;height:544px;background:#c4c4c4"></div>
<div class="ab" style="left:293px;top:189px;width:1px;height:544px;background:#c4c4c4"></div>
<div class="ab" style="left:350px;top:189px;width:1px;height:544px;background:#c4c4c4"></div>
<div class="ab" style="left:407px;top:189px;width:1px;height:544px;background:#c4c4c4"></div>
<div class="ab" style="left:440px;top:189px;width:1px;height:544px;background:#c4c4c4"></div>
<div class="ab" style="left:481px;top:189px;width:1px;height:544px;background:#c4c4c4"></div>
<div class="ab" style="left:514px;top:189px;width:1px;height:544px;background:#c4c4c4"></div>
<div class="ab" style="left:24px;top:206px;width:491px;height:1px;background:#c4c4c4"></div>
<div class="ab" style="left:24px;top:224px;width:491px;height:1px;background:#c4c4c4"></div>
<div class="ab" style="left:24px;top:242px;width:491px;height:1px;background:#c4c4c4"></div>
<div class="ab" style="left:24px;top:260px;width:491px;height:1px;background:#c4c4c4"></div>
<div class="ab" style="left:24px;top:278px;width:491px;height:1px;background:#c4c4c4"></div>
<div class="ab" style="left:24px;top:296px;width:491px;height:1px;background:#c4c4c4"></div>
<div class="ab" style="left:24px;top:314px;width:491px;height:1px;background:#c4c4c4"></div>
<div class="ab" style="left:24px;top:332px;width:491px;height:1px;background:#c4c4c4"></div>
<div class="ab" style="left:24px;top:350px;width:491px;height:1px;background:#c4c4c4"></div>
<div class="ab" style="left:24px;top:368px;width:491px;height:1px;background:#c4c4c4"></div>
<div class="ab" style="left:24px;top:386px;width:491px;height:1px;background:#c4c4c4"></div>
<div class="ab" style="left:24px;top:404px;width:491px;height:1px;background:#c4c4c4"></div>
<div class="ab" style="left:24px;top:422px;width:491px;height:1px;background:#c4c4c4"></div>
<div class="ab" style="left:24px;top:440px;width:491px;height:1px;background:#c4c4c4"></div>
<div class="ab" style="left:24px;top:458px;width:491px;height:1px;background:#c4c4c4"></div>
<div class="ab" style="left:24px;top:476px;width:491px;height:1px;background:#c4c4c4"></div>
<div class="ab" style="left:24px;top:494px;width:491px;height:1px;background:#c4c4c4"></div>
<div class="ab" style="left:24px;top:512px;width:491px;height:1px;background:#c4c4c4"></div>
<div class="ab" style="left:24px;top:530px;width:491px;height:1px;background:#c4c4c4"></div>
<div class="ab" style="left:24px;top:548px;width:491px;height:1px;background:#c4c4c4"></div>
<div class="ab" style="left:24px;top:566px;width:491px;height:1px;background:#c4c4c4"></div>
<div class="ab" style="left:24px;top:584px;width:491px;height:1px;background:#c4c4c4"></div>
<div class="ab" style="left:24px;top:602px;width:491px;height:1px;background:#c4c4c4"></div>
<div class="ab" style="left:24px;top:620px;width:491px;height:1px;background:#c4c4c4"></div>
<div class="ab" style="left:24px;top:638px;width:491px;height:1px;background:#c4c4c4"></div>
<div class="ab" style="left:24px;top:656px;width:491px;height:1px;background:#c4c4c4"></div>
<div class="ab" style="left:24px;top:674px;width:491px;height:1px;background:#c4c4c4"></div>
<div class="ab" style="left:24px;top:692px;width:491px;height:1px;background:#c4c4c4"></div>
<div class="ab" style="left:24px;top:710px;width:491px;height:1px;background:#c4c4c4"></div>
<div class="ab" style="left:24px;top:728px;width:491px;height:1px;background:#c4c4c4"></div>
<div class="ab" style="left:24px;top:746px;width:491px;height:1px;background:#c4c4c4"></div>
<svg class="ab" style="left:60px;top:211px" width="10" height="9"><rect x="0.5" y="0.5" width="9" height="8" rx="1.5" fill="#f2f2f2" stroke="#8a8a8a"/><path d="M2.5 4.5h5" stroke="#3050a0" stroke-width="1.2"/></svg>
<div class="ab" style="left:70px;top:215px;width:7px;border-top:1px dotted #888"></div>
<div class="tt" style="left:77px;top:208px;color:#2a54b0;font-size:12px">区</div>
<div class="tt" style="left:93px;top:208px">消火栓系统</div>
<div class="ab" style="left:83px;top:224px;height:172px;border-left:1px dotted #777"></div>
<div class="ab" style="left:84px;top:233px;width:10px;border-top:1px dotted #777"></div>
<div class="tt" style="left:95px;top:226px;-webkit-text-stroke:0.12px #000">管道</div>
<div class="tt mono" style="left:124px;top:227px;font-size:10px;color:#5a5a5a">DN150</div>
<div class="tt mono" style="left:24px;top:226px;width:33px;text-align:center;font-size:11px">1</div>
<div class="tt mono" style="left:261px;top:227px;width:32px;text-align:center;font-size:10px">m</div>
<div class="tt mono" style="left:294px;top:227px;width:54px;text-align:right;font-size:10px">141.96</div>
<div class="tt mono" style="left:351px;top:227px;width:54px;text-align:right;font-size:10px">141.96</div>
<div class="ab" style="left:84px;top:251px;width:10px;border-top:1px dotted #777"></div>
<div class="tt" style="left:95px;top:244px;-webkit-text-stroke:0.12px #000">管道</div>
<div class="tt mono" style="left:124px;top:245px;font-size:10px;color:#5a5a5a">DN100</div>
<div class="tt mono" style="left:24px;top:244px;width:33px;text-align:center;font-size:11px">2</div>
<div class="tt mono" style="left:261px;top:245px;width:32px;text-align:center;font-size:10px">m</div>
<div class="tt mono" style="left:294px;top:245px;width:54px;text-align:right;font-size:10px">113.23</div>
<div class="tt mono" style="left:351px;top:245px;width:54px;text-align:right;font-size:10px">113.23</div>
<div class="ab" style="left:84px;top:269px;width:10px;border-top:1px dotted #777"></div>
<div class="tt" style="left:95px;top:262px;-webkit-text-stroke:0.12px #000">管道</div>
<div class="tt mono" style="left:124px;top:263px;font-size:10px;color:#5a5a5a">DN80</div>
<div class="tt mono" style="left:24px;top:262px;width:33px;text-align:center;font-size:11px">3</div>
<div class="tt mono" style="left:261px;top:263px;width:32px;text-align:center;font-size:10px">m</div>
<div class="tt mono" style="left:294px;top:263px;width:54px;text-align:right;font-size:10px">247.78</div>
<div class="tt mono" style="left:351px;top:263px;width:54px;text-align:right;font-size:10px">247.78</div>
<div class="ab" style="left:84px;top:287px;width:10px;border-top:1px dotted #777"></div>
<div class="tt" style="left:95px;top:280px;-webkit-text-stroke:0.12px #000">管道</div>
<div class="tt mono" style="left:124px;top:281px;font-size:10px;color:#5a5a5a">DN50</div>
<div class="tt mono" style="left:24px;top:280px;width:33px;text-align:center;font-size:11px">4</div>
<div class="tt mono" style="left:261px;top:281px;width:32px;text-align:center;font-size:10px">m</div>
<div class="tt mono" style="left:294px;top:281px;width:54px;text-align:right;font-size:10px">66.5</div>
<div class="tt mono" style="left:351px;top:281px;width:54px;text-align:right;font-size:10px">66.5</div>
<div class="ab" style="left:84px;top:305px;width:10px;border-top:1px dotted #777"></div>
<div class="tt" style="left:95px;top:298px;-webkit-text-stroke:0.12px #000">管道</div>
<div class="tt mono" style="left:124px;top:299px;font-size:10px;color:#5a5a5a">DN80</div>
<div class="tt mono" style="left:24px;top:298px;width:33px;text-align:center;font-size:11px">5</div>
<div class="tt mono" style="left:261px;top:299px;width:32px;text-align:center;font-size:10px">m</div>
<div class="tt mono" style="left:294px;top:299px;width:54px;text-align:right;font-size:10px">7.66</div>
<div class="tt mono" style="left:351px;top:299px;width:54px;text-align:right;font-size:10px">7.66</div>
<div class="ab" style="left:84px;top:323px;width:10px;border-top:1px dotted #777"></div>
<div class="tt" style="left:95px;top:316px;-webkit-text-stroke:0.12px #000">管道</div>
<div class="tt mono" style="left:124px;top:317px;font-size:10px;color:#5a5a5a">DN80</div>
<div class="tt mono" style="left:24px;top:316px;width:33px;text-align:center;font-size:11px">6</div>
<div class="tt mono" style="left:261px;top:317px;width:32px;text-align:center;font-size:10px">m</div>
<div class="tt mono" style="left:294px;top:317px;width:54px;text-align:right;font-size:10px">6.33</div>
<div class="tt mono" style="left:351px;top:317px;width:54px;text-align:right;font-size:10px">6.33</div>
<div class="ab" style="left:84px;top:341px;width:10px;border-top:1px dotted #777"></div>
<div class="tt" style="left:95px;top:334px;-webkit-text-stroke:0.12px #000">管道</div>
<div class="tt mono" style="left:124px;top:335px;font-size:10px;color:#5a5a5a">DN80</div>
<div class="tt mono" style="left:24px;top:334px;width:33px;text-align:center;font-size:11px">7</div>
<div class="tt mono" style="left:261px;top:335px;width:32px;text-align:center;font-size:10px">m</div>
<div class="tt mono" style="left:294px;top:335px;width:54px;text-align:right;font-size:10px">3.42</div>
<div class="tt mono" style="left:351px;top:335px;width:54px;text-align:right;font-size:10px">3.42</div>
<div class="ab" style="left:84px;top:359px;width:10px;border-top:1px dotted #777"></div>
<div class="tt" style="left:95px;top:352px;-webkit-text-stroke:0.12px #000">管道</div>
<div class="tt mono" style="left:124px;top:353px;font-size:10px;color:#5a5a5a">DN80</div>
<div class="tt mono" style="left:24px;top:352px;width:33px;text-align:center;font-size:11px">8</div>
<div class="tt mono" style="left:261px;top:353px;width:32px;text-align:center;font-size:10px">m</div>
<div class="tt mono" style="left:294px;top:353px;width:54px;text-align:right;font-size:10px">6.33</div>
<div class="tt mono" style="left:351px;top:353px;width:54px;text-align:right;font-size:10px">6.33</div>
<div class="ab" style="left:84px;top:377px;width:10px;border-top:1px dotted #777"></div>
<div class="tt" style="left:95px;top:370px;-webkit-text-stroke:0.12px #000">管道</div>
<div class="tt mono" style="left:124px;top:371px;font-size:10px;color:#5a5a5a">DN80</div>
<div class="tt mono" style="left:24px;top:370px;width:33px;text-align:center;font-size:11px">9</div>
<div class="tt mono" style="left:261px;top:371px;width:32px;text-align:center;font-size:10px">m</div>
<div class="tt mono" style="left:294px;top:371px;width:54px;text-align:right;font-size:10px">2.87</div>
<div class="tt mono" style="left:351px;top:371px;width:54px;text-align:right;font-size:10px">2.87</div>
<div class="ab" style="left:417px;top:209px;width:13px;height:13px;border:1px solid #333;background:#fff"></div>
<div class="ab" style="left:417px;top:227px;width:13px;height:13px;border:1px solid #333;background:#fff"></div>
<div class="ab" style="left:417px;top:245px;width:13px;height:13px;border:1px solid #333;background:#fff"></div>
<div class="ab" style="left:417px;top:263px;width:13px;height:13px;border:1px solid #333;background:#fff"></div>
<div class="ab" style="left:417px;top:281px;width:13px;height:13px;border:1px solid #333;background:#fff"></div>
<div class="ab" style="left:417px;top:299px;width:13px;height:13px;border:1px solid #333;background:#fff"></div>
<div class="ab" style="left:417px;top:317px;width:13px;height:13px;border:1px solid #333;background:#fff"></div>
<div class="ab" style="left:417px;top:335px;width:13px;height:13px;border:1px solid #333;background:#fff"></div>
<div class="ab" style="left:417px;top:353px;width:13px;height:13px;border:1px solid #333;background:#fff"></div>
<div class="ab" style="left:417px;top:371px;width:13px;height:13px;border:1px solid #333;background:#fff"></div>
<div class="ab" style="left:84px;top:395px;width:10px;border-top:1px dotted #cce"></div>
<div class="tt" style="left:95px;top:388px;color:#fff">阀门</div>
<div class="tt mono" style="left:24px;top:388px;width:33px;text-align:center;font-size:11px">10</div>
<div class="ab" style="left:247px;top:388px;width:12px;height:14px;border:1px solid #888;background:linear-gradient(#f4f4f4,#d8d8d8)"></div>
<svg class="ab" style="left:247px;top:388px" width="12" height="14"><path d="M6 3v6M3.5 6.5L6 9l2.5-2.5M3 11h6" stroke="#000" stroke-width="1.3" fill="none"/></svg>
<div class="tt mono" style="left:294px;top:389px;width:54px;text-align:right;font-size:10px;color:#fff">38</div>
<div class="tt mono" style="left:351px;top:389px;width:54px;text-align:right;font-size:10px;color:#fff">38</div>
<div class="ab" style="left:417px;top:389px;width:13px;height:13px;border:1px solid #333;background:#fff"></div>
<div class="tt" style="left:99px;top:424px;color:#8a8a8a;font-style:italic">输入拼音开头字母查询</div>
<div class="ab" style="left:16px;top:382px;width:430px;height:34px;border:3px solid #f02c34"></div>
<div class="ab" style="left:515px;top:189px;width:17px;height:544px;background:#f0f0f0;border-left:1px solid #e0e0e0"></div>
<svg class="ab" style="left:515px;top:190px" width="17" height="14"><path d="M4.5 9.5L8.5 5.5l4 4" stroke="#404040" stroke-width="2" fill="none"/></svg>
<div class="ab" style="left:516px;top:206px;width:15px;height:17px;background:#cdcdcd"></div>
<div class="ab" style="left:0;top:143px;width:1px;height:590px;background:#909090"></div>
<svg class="ab" style="left:0;top:0" width="22" height="733"><path d="M1.5 227 L20 232 V298 L1.5 305" fill="#fdfaef" stroke="#b4b8c0" stroke-width="1"/></svg>
<svg class="ab" style="left:2px;top:232px" width="16" height="15"><path d="M1 3l2-2 2.5 2.5-2 2zM5 6l2-2 2.5 2.5-2 2zM9 9l2-2 2.5 2.5-2 2zM12 10.5l2-2 2 2-2 2z" fill="#fff" stroke="#5a6a8a" stroke-width=".9"/><path d="M2 6v6l3 2" stroke="#5a6a8a" fill="none" stroke-width=".8"/></svg>
<div class="ab" style="left:4px;top:249px;width:13px;font-size:12px;line-height:12px;text-align:center;white-space:normal;word-break:break-all">项目管理</div>
<svg class="ab" style="left:0;top:0" width="22" height="733"><path d="M1.5 305.5 L20 310.5 V374.5 L1.5 381.5" fill="#fdfaef" stroke="#b4b8c0" stroke-width="1"/></svg>
<svg class="ab" style="left:2px;top:308px" width="16" height="14"><rect x=".5" y=".5" width="14" height="13" fill="#fff" stroke="#8aa0c8"/><rect x="1" y="1" width="13" height="3" fill="#98b0d8"/><path d="M5.5 1v12.5M10 1v12.5M1 7h13M1 10h13" stroke="#b8c8e0" stroke-width=".8"/></svg>
<div class="ab" style="left:4px;top:324px;width:13px;font-size:12px;line-height:12px;text-align:center;white-space:normal;word-break:break-all">图纸管理</div>
<div class="ab" style="left:532px;top:143px;width:1px;height:590px;background:#707070"></div>
<div class="ab" style="left:533px;top:143px;width:3px;height:590px;background:#fcd452"></div>
<div class="ab" style="left:536px;top:143px;width:657px;height:24px;background:#a6c9ef"></div>
<div class="ab" style="left:540px;top:144px;width:57px;height:22px;border:1px solid #9aa4b0;background:linear-gradient(#f8f8f8,#dcdcdc)"></div>
<div class="tt" style="left:544px;top:148px">零星项目</div>
<div class="ab" style="left:597px;top:144px;width:131px;height:22px;background:#f9b56a"></div>
<div class="tt" style="left:602px;top:148px">XD地下室给排水...</div>
<svg class="ab" style="left:710px;top:151px" width="13" height="12"><path d="M2 2L11 10.5M11 2L2 10.5" stroke="#f01010" stroke-width="2.6"/></svg>
<div class="ab" style="left:729px;top:144px;width:27px;height:22px;border:1px solid #b0b4bc;border-right-color:#8a8e96;border-bottom-color:#8a8e96;background:linear-gradient(#fbfcfe,#dfe4ec)"></div>
<svg class="ab" style="left:733px;top:146px" width="18" height="18" viewBox="0 0 18 18"><rect x="1.5" y="4.5" width="10.5" height="12.5" fill="#eef4fc" stroke="#8ab2e4" stroke-width="1"/><path d="M11.2 2.5v7.5M7.5 6.2h7.5" stroke="#3a9a3a" stroke-width="3.2"/></svg>
<div class="ab" style="left:536px;top:167px;width:657px;height:21px;background:#fff"></div>
<div class="tt" style="left:536px;top:170px">请选择或输入操作命令:</div>
<div class="ab" style="left:536px;top:188px;width:657px;height:545px;background:#012f21"></div>
<div class="ab" style="left:536px;top:188px;width:657px;height:545px;overflow:hidden">
<div class="ab" style="left:111px;top:65px;font-size:36px;line-height:42px;font-weight:300;color:#c4c4c4;-webkit-text-stroke:1.2px #012f21;letter-spacing:3.6px;white-space:nowrap;transform:scaleY(1.52);transform-origin:0 0">穿高差梁接室外给水管道</div>
<svg class="ab" style="left:0;top:0" width="657" height="545" viewBox="0 0 657 545">
<path d="M105 131.5H571.5V186" stroke="#7c9c78" stroke-width="1" fill="none"/>
<rect x="0" y="182" width="128" height="9" fill="#729a6e"/>
<rect x="177" y="182" width="117" height="9" fill="#729a6e"/>
<rect x="345" y="182" width="163" height="9" fill="#729a6e"/>
<rect x="557" y="182" width="15" height="9" fill="#729a6e"/>
<rect x="384" y="152" width="5.5" height="68.5" fill="#a0a0a0"/>
<rect x="515" y="152" width="5.5" height="68.5" fill="#a0a0a0"/>
<path d="M403 152V167H501V152M452 152V167" stroke="#a0a0a0" stroke-width="5" fill="none"/>
<path d="M403 220.5V206H501V220.5M452 220.5V206" stroke="#a0a0a0" stroke-width="5" fill="none"/>
<rect x="0" y="185" width="572" height="3" fill="#ff0000"/>
<rect x="0" y="263" width="36" height="10" fill="#8a7f89"/>
<rect x="85" y="263" width="163" height="10" fill="#8a7f89"/>
<rect x="336" y="263" width="163" height="10" fill="#8a7f89"/>
<rect x="548" y="263" width="82" height="10" fill="#8a7f89"/>
<rect x="0" y="346" width="156" height="8" fill="#9c9a72"/>
<rect x="205" y="346" width="81" height="8" fill="#9c9a72"/>
<rect x="336" y="346" width="164" height="8" fill="#9c9a72"/>
<rect x="548" y="346" width="48" height="8" fill="#9c9a72"/>
<line x1="616.0" y1="282.0" x2="664.0" y2="254.4" stroke="#8a7f89" stroke-width="9.5"/>
<line x1="439.0" y1="383.6" x2="579.0" y2="303.2" stroke="#8a7f89" stroke-width="9.5"/>
<line x1="255.0" y1="489.2" x2="396.0" y2="408.3" stroke="#8a7f89" stroke-width="9.5"/>
<line x1="134.0" y1="558.7" x2="213.0" y2="513.3" stroke="#8a7f89" stroke-width="9.5"/>
<line x1="581.0" y1="359.0" x2="664.0" y2="311.4" stroke="#9c9a72" stroke-width="7"/>
<line x1="396.0" y1="465.2" x2="538.0" y2="383.7" stroke="#9c9a72" stroke-width="7"/>
<line x1="244.0" y1="552.4" x2="353.0" y2="489.9" stroke="#9c9a72" stroke-width="7"/>
<rect x="0" y="267" width="639.5" height="3" fill="#ff0000"/>
<rect x="0" y="348" width="597" height="4" fill="#ff0000"/>
<line x1="134.0" y1="558.7" x2="664.0" y2="254.4" stroke="#ff0000" stroke-width="3.2"/>
<line x1="234.0" y1="558.2" x2="664.0" y2="311.4" stroke="#ff0000" stroke-width="3.2"/>
<path transform="translate(144.20000000000005,198.5) rotate(0) scale(1)" d="M12.3,-17.3 V-3 L9.5,0 H3 L0,-3.3" stroke="#8fb08a" stroke-width="1" fill="none"/>
<path transform="translate(523.5,198.5) rotate(0) scale(1)" d="M12.3,-17.3 V-3 L9.5,0 H3 L0,-3.3" stroke="#8fb08a" stroke-width="1" fill="none"/>
<path transform="translate(42.200000000000045,280.6) rotate(0) scale(1)" d="M12.3,-18.2 V-3 L9.7,0 H3 L0,-3.2 M18.4,-15 L21.2,-18.3 H28.8 L30.7,-16.4 V-13.8 L28.5,-10.2 H21.4 L18.4,-6.6 V0 H30" stroke="#a99fa8" stroke-width="1" fill="none"/>
<path transform="translate(244,280.6) rotate(0) scale(1)" d="M12.3,-18.2 V-3 L9.7,0 H3 L0,-3.2 M18.4,-15 L21.2,-18.3 H28.8 L30.7,-16.4 V-13.8 L28.5,-10.2 H21.4 L18.4,-6.6 V0 H30" stroke="#a99fa8" stroke-width="1" fill="none"/>
<path transform="translate(504.5,280.6) rotate(0) scale(1)" d="M12.3,-18.2 V-3 L9.7,0 H3 L0,-3.2 M18.4,-15 L21.2,-18.3 H28.8 L30.7,-16.4 V-13.8 L28.5,-10.2 H21.4 L18.4,-6.6 V0 H30" stroke="#a99fa8" stroke-width="1" fill="none"/>
<path transform="translate(162.20000000000005,362.4) rotate(0) scale(1)" d="M12.3,-18.2 V-3 L9.7,0 H3 L0,-3.2 M19.1,-15.8 L22,-19.2 H27.6 L30.5,-16.4 V-13.7 L28.3,-9.6 H25 M28.3,-9.6 L30.5,-7 V-3 L27.6,-0.1 H21 L19.1,-2" stroke="#b5b58c" stroke-width="1" fill="none"/>
<path transform="translate(506,362.4) rotate(0) scale(1)" d="M12.3,-18.2 V-3 L9.7,0 H3 L0,-3.2 M19.1,-15.8 L22,-19.2 H27.6 L30.5,-16.4 V-13.7 L28.3,-9.6 H25 M28.3,-9.6 L30.5,-7 V-3 L27.6,-0.1 H21 L19.1,-2" stroke="#b5b58c" stroke-width="1" fill="none"/>
<path transform="translate(595,309) rotate(-29.9) scale(1)" d="M12.3,-18.2 V-3 L9.7,0 H3 L0,-3.2 M18.4,-15 L21.2,-18.3 H28.8 L30.7,-16.4 V-13.8 L28.5,-10.2 H21.4 L18.4,-6.6 V0 H30" stroke="#a99fa8" stroke-width="1" fill="none"/>
<path transform="translate(408,415) rotate(-29.9) scale(1)" d="M12.3,-18.2 V-3 L9.7,0 H3 L0,-3.2 M18.4,-15 L21.2,-18.3 H28.8 L30.7,-16.4 V-13.8 L28.5,-10.2 H21.4 L18.4,-6.6 V0 H30" stroke="#a99fa8" stroke-width="1" fill="none"/>
<path transform="translate(225,520) rotate(-29.9) scale(1)" d="M12.3,-18.2 V-3 L9.7,0 H3 L0,-3.2 M18.4,-15 L21.2,-18.3 H28.8 L30.7,-16.4 V-13.8 L28.5,-10.2 H21.4 L18.4,-6.6 V0 H30" stroke="#a99fa8" stroke-width="1" fill="none"/>
<path transform="translate(550,393) rotate(-29.9) scale(1)" d="M12.3,-18.2 V-3 L9.7,0 H3 L0,-3.2 M19.1,-15.8 L22,-19.2 H27.6 L30.5,-16.4 V-13.7 L28.3,-9.6 H25 M28.3,-9.6 L30.5,-7 V-3 L27.6,-0.1 H21 L19.1,-2" stroke="#b5b58c" stroke-width="1" fill="none"/>
<path transform="translate(364,499) rotate(-29.9) scale(1)" d="M12.3,-18.2 V-3 L9.7,0 H3 L0,-3.2 M19.1,-15.8 L22,-19.2 H27.6 L30.5,-16.4 V-13.7 L28.3,-9.6 H25 M28.3,-9.6 L30.5,-7 V-3 L27.6,-0.1 H21 L19.1,-2" stroke="#b5b58c" stroke-width="1" fill="none"/>
<path d="M294.5 172.0V201.0L343.5 172.0V201.0Z" stroke="#b4b4b4" stroke-width="1" fill="none"/>
<path d="M319.5 167.0V206.0M299.5 166.5L339.5 206.0M339.5 166.5L299.5 206.0M299.5 186.5H338.5" stroke="#22e022" stroke-width="1" fill="none"/>
<path d="M286.5 254.0V283.0L335.5 254.0V283.0Z" stroke="#b4b4b4" stroke-width="1" fill="none"/>
<path d="M311.5 249.0V288.0M291.5 248.5L331.5 288.0M331.5 248.5L291.5 288.0M291.5 268.5H330.5" stroke="#22e022" stroke-width="1" fill="none"/>
<path d="M286.5 335.5V364.5L335.5 335.5V364.5Z" stroke="#b4b4b4" stroke-width="1" fill="none"/>
<path d="M311.5 330.5V369.5M291.5 330L331.5 369.5M331.5 330L291.5 369.5M291.5 350H330.5" stroke="#22e022" stroke-width="1" fill="none"/>
</svg></div>
</body></html>
